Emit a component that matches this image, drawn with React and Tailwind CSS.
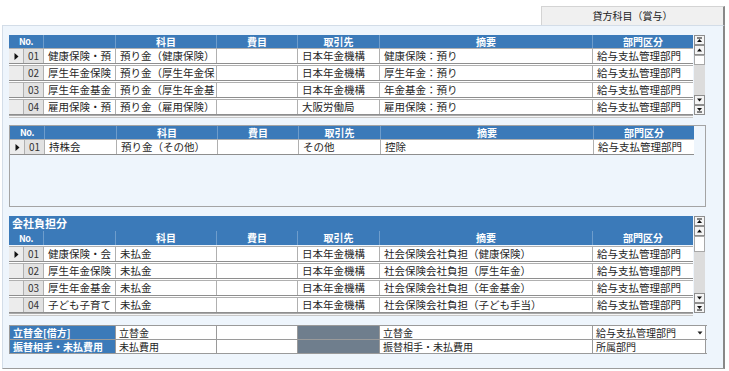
import React from "react";

const W = [15, 20, 72, 101, 81, 82, 213, 100];

function Icon({ kind }) {
  const p = {
    first: (
      <>
        <rect x="1" y="0.5" width="5" height="1" />
        <polygon points="1,5 6,5 3.5,2" />
      </>
    ),
    up: <polygon points="1,4.5 6,4.5 3.5,1.5" />,
    down: <polygon points="1,1.5 6,1.5 3.5,4.5" />,
    last: (
      <>
        <polygon points="1,1 6,1 3.5,4" />
        <rect x="1" y="4.5" width="5" height="1" />
      </>
    ),
  }[kind];
  return (
    <svg width="7" height="6" viewBox="0 0 7 6" fill="#111">
      {p}
    </svg>
  );
}

function SBtn({ kind }) {
  return (
    <div className="h-[10px] shrink-0 bg-[#f4f4f4] border border-[#8e8e8e] flex items-center justify-center">
      <Icon kind={kind} />
    </div>
  );
}

function Scrollbar({ thumb = 10 }) {
  return (
    <div className="flex flex-col w-[11px] ml-[1px] self-stretch">
      <SBtn kind="first" />
      <SBtn kind="up" />
      <div className="shrink-0 bg-white border border-[#a8a8a8]" style={{ height: thumb }} />
      <div className="flex-1 bg-[#dcdcdc]" />
      <SBtn kind="down" />
      <SBtn kind="last" />
    </div>
  );
}

function Header({ h = "h-[13px]" }) {
  return (
    <div className={`flex ${h} bg-[#3b7ab9] text-white font-bold text-[10px] leading-none`}>
      <div className="w-[35px] flex items-center justify-center border-r border-[#6e9dcc] text-[9px] tracking-tighter">No.</div>
      <div className="w-[72px] border-r border-[#6e9dcc]" />
      <div className="w-[101px] flex items-center justify-center border-r border-[#6e9dcc]">科目</div>
      <div className="w-[81px] flex items-center justify-center border-r border-[#6e9dcc]">費目</div>
      <div className="w-[82px] flex items-center justify-center border-r border-[#6e9dcc]">取引先</div>
      <div className="w-[213px] flex items-center justify-center border-r border-[#6e9dcc]">摘要</div>
      <div className="w-[100px] flex items-center justify-center">部門区分</div>
    </div>
  );
}

function Row({ sel, no, cells }) {
  return (
    <div className="flex h-[16px] border-t border-[#b0b0b0] border-b border-b-[#8e8e8e] bg-white text-[10.5px] leading-none text-[#1e1e1e]">
      <div className="w-[15px] shrink-0 bg-[#ececec] border-r border-[#b0b0b0] flex items-center justify-center">
        {sel && (
          <svg width="5" height="7" viewBox="0 0 5 7" fill="#111">
            <polygon points="0.5,0 4.5,3.5 0.5,7" />
          </svg>
        )}
      </div>
      <div className="w-[20px] shrink-0 bg-[#e2e2e2] border-r border-[#b0b0b0] flex items-center pl-[4px] text-[10px] text-[#333]">
        {no}
      </div>
      {cells.map((c, i) => (
        <div
          key={i}
          style={{ width: W[i + 2] }}
          className={`shrink-0 flex items-center pl-[4px] overflow-hidden whitespace-nowrap ${i < 5 ? "border-r border-[#b0b0b0]" : ""}`}
        >
          {c}
        </div>
      ))}
    </div>
  );
}

function Bottom() {
  return <div className="h-[3px] border-t border-[#a8a8a8] border-b border-b-[#c8c8c8] bg-[#f6f6f6]" />;
}

const B = "給与支払管理部門";
const t1 = [
  ["01", ["健康保険・預", "預り金（健康保険）", "", "日本年金機構", "健康保険：預り", B]],
  ["02", ["厚生年金保険", "預り金（厚生年金保", "", "日本年金機構", "厚生年金：預り", B]],
  ["03", ["厚生年金基金", "預り金（厚生年金基", "", "日本年金機構", "年金基金：預り", B]],
  ["04", ["雇用保険・預", "預り金（雇用保険）", "", "大阪労働局", "雇用保険：預り", B]],
];
const t3 = [
  ["01", ["健康保険・会", "未払金", "", "日本年金機構", "社会保険会社負担（健康保険）", B]],
  ["02", ["厚生年金保険", "未払金", "", "日本年金機構", "社会保険会社負担（厚生年金）", B]],
  ["03", ["厚生年金基金", "未払金", "", "日本年金機構", "社会保険会社負担（年金基金）", B]],
  ["04", ["子ども子育て", "未払金", "", "日本年金機構", "社会保険会社負担（子ども手当）", B]],
];

function FormRow({ label, a, c, d, dropdown, first }) {
  const cell = "shrink-0 h-full flex items-center pl-[3px] border-r border-[#9a9a9a] whitespace-nowrap";
  return (
    <div className={`flex h-[13px] box-content border-b border-[#9a9a9a] ${first ? "border-t" : ""} text-[10px] leading-[11px] text-[#1e1e1e]`}>
      <div className={`${cell} w-[107px] bg-[#3b7ab9] text-white font-bold border-l`}>{label}</div>
      <div className={`${cell} w-[101px] bg-white`}>{a}</div>
      <div className={`${cell} w-[81px] bg-white`} />
      <div className={`${cell} w-[82px] bg-[#6f7e8d]`} />
      <div className={`${cell} w-[213px] bg-white`}>{c}</div>
      <div className={`${cell} w-[113px] bg-white justify-between pr-[2px]`}>
        <span>{d}</span>
        {dropdown && (
          <svg width="6" height="4" viewBox="0 0 6 4" fill="#222">
            <polygon points="0.5,0.5 5.5,0.5 3,3.5" />
          </svg>
        )}
      </div>
    </div>
  );
}

export default function App() {
  return (
    <div className="w-[729px] h-[371px] bg-white overflow-hidden font-['Noto_Sans_CJK_JP','Noto_Sans',sans-serif]">
      <div className="h-[25px] flex items-end justify-end pr-[4px]">
        <div className="w-[184px] h-[19px] bg-[#f0f0f0] border-t border-l border-[#d4d4d4] border-r-2 border-r-[#888] flex items-center justify-center text-[10px] leading-none text-[#222]">
          貸方科目（賞与）
        </div>
      </div>
      <div className="ml-[2px] mr-[4px] h-[344px] bg-[#eef5fc] border-t border-l border-[#d3dde8] border-r-2 border-r-[#888] border-b border-b-[#9c9c9c] pl-[6px] pt-[9px]">
        {/* table 1 */}
        <div className="flex w-[697px]">
          <div className="w-[684px] flex flex-col">
            <Header />
            <div className="flex flex-col gap-[1px] bg-white">
              {t1.map(([no, cells], i) => (
                <Row key={no} sel={i === 0} no={no} cells={cells} />
              ))}
            </div>
          </div>
          <Scrollbar thumb={10} />
        </div>
        <div className="w-[684px]">
          <Bottom />
        </div>

        {/* table 2 */}
        <div className="mt-[7px] w-[697px] h-[82px] border border-[#a4a4a4] bg-[#eef5fc]">
          <div className="w-[684px]">
            <Header />
            <Row sel no="01" cells={["持株会", "預り金（その他）", "", "その他", "控除", B]} />
          </div>
        </div>

        {/* table 3 */}
        <div className="mt-[9px] flex w-[697px]">
          <div className="w-[684px] flex flex-col">
            <div className="h-[15px] bg-[#3b7ab9] text-white text-[11px] font-bold leading-none flex items-center pl-[3px]">
              会社負担分
            </div>
            <Header h="h-[14px]" />
            <div className="flex flex-col gap-[1px] bg-white mt-[1px]">
              {t3.map(([no, cells], i) => (
                <Row key={no} sel={i === 0} no={no} cells={cells} />
              ))}
            </div>
          </div>
          <Scrollbar thumb={16} />
        </div>
        <div className="w-[684px]">
          <Bottom />
        </div>

        {/* form rows */}
        <div className="mt-[9px] flex flex-col w-[698px]">
          <FormRow first label="立替金[借方]" a="立替金" c="立替金" d={B} dropdown />
          <FormRow label="振替相手・未払費用" a="未払費用" c="振替相手・未払費用" d="所属部門" />
        </div>
      </div>
    </div>
  );
}
